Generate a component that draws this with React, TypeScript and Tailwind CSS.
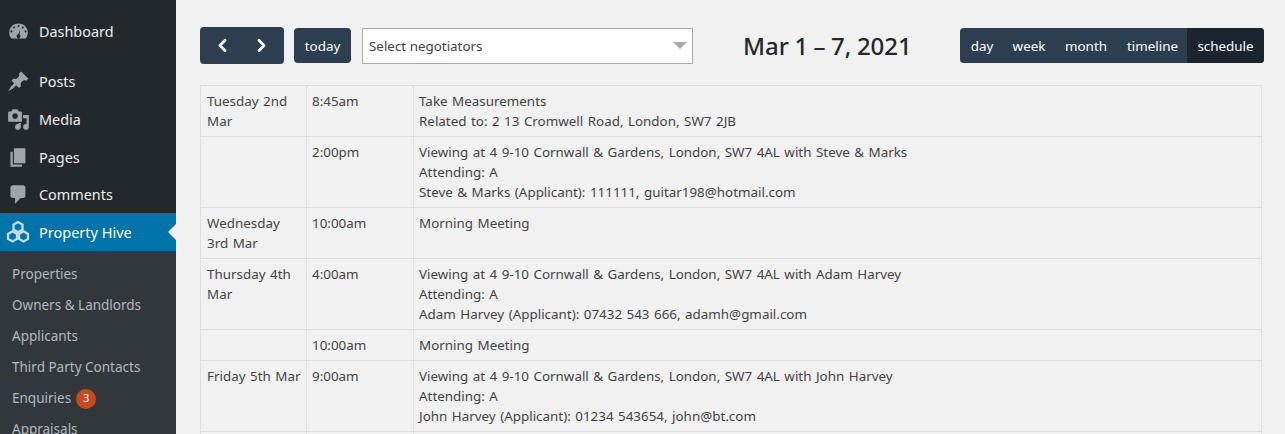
import React from "react";
import { ChevronLeft, ChevronRight } from "lucide-react";

const iconClass = "h-[23px] w-[23px] shrink-0 -translate-y-[1px]";

function Gauge() {
  return (
    <svg viewBox="0 0 20 20" className={iconClass} fill="#a0a5aa">
      <path fillRule="evenodd" d="M3.800 16h12.400c1.200-1.400 1.900-3.200 1.900-5.100C18.100 6.400 14.500 3 10 3S1.900 6.400 1.900 10.900c0 1.900.7 3.700 1.900 5.100zM10 4.300a.9.9 0 1 1 0 1.800.9.900 0 0 1 0-1.800zM6.200 5.600a.9.9 0 1 1 0 1.800.9.900 0 0 1 0-1.800zm7.600 0a.9.9 0 1 1 0 1.800.9.900 0 0 1 0-1.800zM3.900 9a.9.9 0 1 1 0 1.800.9.900 0 0 1 0-1.800zm12.200 0a.9.9 0 1 1 0 1.800.9.900 0 0 1 0-1.800zM11.400 8l-.5 4.600a1.700 1.700 0 1 1-1.800 0c.9-.1 1.600-2.500 2.300-4.600z" />
    </svg>
  );
}
function Pin() {
  return (
    <svg viewBox="0 0 20 20" className={iconClass} fill="#a0a5aa">
      <path d="M10.440 3.020l1.820-1.820 6.360 6.350-1.830 1.820c-1.050-.680-2.480-.570-3.410.360l-.750.750c-.920.930-1.040 2.350-.350 3.410l-1.830 1.820-2.410-2.410-2.830 2.830-4.120 2.410 2.410-4.120 2.830-2.830-2.410-2.410 1.830-1.820c1.050.680 2.480.570 3.410-.360l.750-.750c.930-.930 1.040-2.350.360-3.410z" />
    </svg>
  );
}
function MediaIcon() {
  return (
    <svg viewBox="0 0 20 20" className={iconClass} fill="#a0a5aa">
      <path d="M13 11V4c0-.550-.450-1-1-1h-1.670L9 1H5L3.670 3H2c-.550 0-1 .450-1 1v7c0 .550.450 1 1 1h10c.550 0 1-.450 1-1zM7 4.500c1.380 0 2.500 1.120 2.500 2.500S8.380 9.500 7 9.500 4.500 8.380 4.500 7 5.620 4.500 7 4.500zM14 6h5v10.500c0 1.380-1.120 2.500-2.500 2.500S14 17.880 14 16.500s1.120-2.500 2.500-2.500c.170 0 .340.020.500.050V9h-3V6zm-4 8.050V13h2v3.500c0 1.380-1.120 2.500-2.500 2.500S7 17.880 7 16.500 8.120 14 9.500 14c.170 0 .340.020.500.050z" />
    </svg>
  );
}
function PagesIcon() {
  return (
    <svg viewBox="0 0 20 20" className={iconClass} fill="#a0a5aa">
      <path d="M6 15V2h10v13H6zm-1 1h8v2H3V5h2v11z" />
    </svg>
  );
}
function CommentIcon() {
  return (
    <svg viewBox="0 0 20 20" className={iconClass} fill="#a0a5aa">
      <path d="M5 2h9c1.100 0 2 .900 2 2v7c0 1.100-.900 2-2 2h-2l-5 5v-5H5c-1.100 0-2-.900-2-2V4c0-1.100.900-2 2-2z" />
    </svg>
  );
}
function HiveIcon() {
  return (
    <svg viewBox="0 0 24 24" className="h-[24px] w-[24px] shrink-0" fill="none" stroke="#c5dbe6" strokeWidth="2.300">
      <path d="M12 2l4.500 2.600v5L12 12.200 7.500 9.600v-5z" />
      <path d="M6.500 11.300l4.500 2.600v5L6.500 21.500 2 18.900v-5z" />
      <path d="M17.500 11.300l4.500 2.600v5l-4.500 2.600-4.500-2.600v-5z" />
    </svg>
  );
}

const top: [string, React.ReactNode, string][] = [
  ["Posts", <Pin />, "h-[38px]"],
  ["Media", <MediaIcon />, "h-[38px]"],
  ["Pages", <PagesIcon />, "h-[38px]"],
  ["Comments", <CommentIcon />, "h-[36px]"],
];

const subs = ["Properties", "Owners & Landlords", "Applicants", "Third Party Contacts"];

const rows: [string, string, string[]][] = [
  ["Tuesday 2nd Mar", "8:45am", ["Take Measurements", "Related to: 2 13 Cromwell Road, London, SW7 2JB"]],
  ["", "2:00pm", ["Viewing at 4 9-10 Cornwall & Gardens, London, SW7 4AL with Steve & Marks", "Attending: A", "Steve & Marks (Applicant): 111111, guitar198@hotmail.com"]],
  ["Wednesday 3rd Mar", "10:00am", ["Morning Meeting"]],
  ["Thursday 4th Mar", "4:00am", ["Viewing at 4 9-10 Cornwall & Gardens, London, SW7 4AL with Adam Harvey", "Attending: A", "Adam Harvey (Applicant): 07432 543 666, adamh@gmail.com"]],
  ["", "10:00am", ["Morning Meeting"]],
  ["Friday 5th Mar", "9:00am", ["Viewing at 4 9-10 Cornwall & Gardens, London, SW7 4AL with John Harvey", "Attending: A", "John Harvey (Applicant): 01234 543654, john@bt.com"]],
  ["", "", [" "]],
];

export default function App() {
  return (
    <div className="flex h-[434px] w-[1285px] overflow-hidden bg-[#f1f1f1] font-['Noto_Sans',sans-serif] text-[13.4px] text-[#444]">
      <aside className="h-full w-[176px] shrink-0 bg-[#23282d] pt-[13px] text-[14.4px] text-[#eeeeee]">
        <div className="mb-[12px] flex h-[38px] items-center gap-[9px] pl-[7px]">
          <Gauge />
          <span>Dashboard</span>
        </div>
        {top.map(([label, icon, h]) => (
          <div key={label} className={`flex items-center gap-[9px] pl-[7px] ${h}`}>
            {icon}
            <span>{label}</span>
          </div>
        ))}
        <div className="relative flex h-[38px] items-center gap-[9px] bg-[#0073aa] pl-[6px] text-[14.5px] text-white">
          <HiveIcon />
          <span className="pt-[1px]">Property Hive</span>
          <div className="absolute right-0 top-[11px] h-0 w-0 border-y-[8px] border-r-[8px] border-y-transparent border-r-[#f1f1f1]" />
        </div>
        <div className="h-[183px] overflow-hidden bg-[#32373c] pt-[8px] text-[13.5px] text-[#b4b9be]">
          {subs.map((s) => (
            <div key={s} className="flex h-[31px] items-center pl-[12px]">{s}</div>
          ))}
          <div className="flex h-[31px] items-center gap-[5px] pl-[12px]">
            Enquiries
            <span className="flex h-5 w-5 items-center justify-center rounded-full bg-[#ca4a1f] text-[11px] text-white">3</span>
          </div>
          <div className="flex h-[31px] items-center pl-[12px]">Appraisals</div>
        </div>
      </aside>

      <main className="min-w-0 flex-1 pl-[24px] pr-[21px] pt-[27px]">
        <div className="flex h-[37px] items-center">
          <div className="flex h-[37px] w-[84px] items-center justify-around rounded-[4px] bg-[#2c3e50] px-[3px] text-white">
            <ChevronLeft size={21} strokeWidth={3} />
            <ChevronRight size={21} strokeWidth={3} />
          </div>
          <div className="ml-[10px] flex h-[35px] w-[57px] items-center justify-center rounded-[4px] bg-[#2c3e50] pt-[2px] text-white">today</div>
          <div className="ml-[11px] flex h-[36px] w-[331px] items-center justify-between border border-[#aaaaaa] bg-white pl-[6px] pr-[5px]">
            <span className="pt-[2px]">Select negotiators</span>
            <div className="h-0 w-0 border-x-[7px] border-t-[7px] border-x-transparent border-t-[#aaaaaa]" />
          </div>
          <h2 className="ml-[50px] w-[217px] text-[24px] font-medium text-[#23282d] [word-spacing:-0.75px]">Mar 1 – 7, 2021</h2>
          <div className="flex h-[35px] w-[304px] overflow-hidden rounded-[4px] bg-[#2c3e50] text-white">
            <span className="flex w-[44px] items-center justify-center pt-[2px]">day</span>
            <span className="flex w-[50px] items-center justify-center pt-[2px]">week</span>
            <span className="flex w-[64px] items-center justify-center pt-[2px]">month</span>
            <span className="flex w-[69px] items-center justify-center pt-[2px]">timeline</span>
            <span className="flex flex-1 items-center justify-center bg-[#1a252f] pt-[2px]">schedule</span>
          </div>
        </div>

        <table className="mt-[21px] w-[1062px] table-fixed border-collapse leading-[20px] [word-spacing:1px]">
          <colgroup>
            <col className="w-[106px]" />
            <col className="w-[107px]" />
            <col />
          </colgroup>
          <tbody>
            {rows.map((r, i) => (
              <tr key={i}>
                <td className="border border-[#dddddd] p-[5px] pl-[6px] align-top">{r[0]}</td>
                <td className="border border-[#dddddd] p-[5px] align-top">{r[1]}</td>
                <td className="border border-[#dddddd] p-[5px] align-top">
                  {r[2].map((l, j) => (
                    <div key={j}>{l}</div>
                  ))}
                </td>
              </tr>
            ))}
          </tbody>
        </table>
      </main>
    </div>
  );
}
